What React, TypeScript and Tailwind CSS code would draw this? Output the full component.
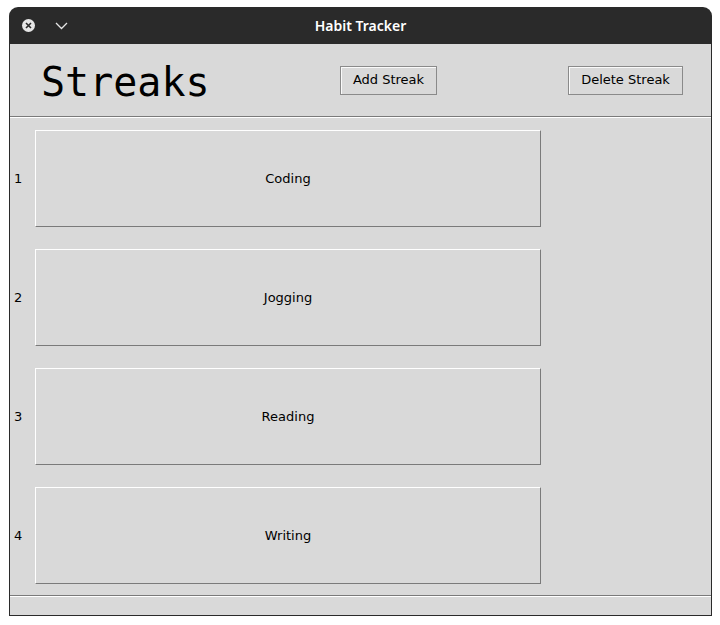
import React from 'react';

const streaks = ['Coding', 'Jogging', 'Reading', 'Writing'];

export default function App() {
  return (
    <div className="w-[720px] h-[625px] bg-white pt-[7px] pl-[9px] font-['DejaVu_Sans',sans-serif]">
      <div className="w-[703px] h-[609px] flex flex-col rounded-t-[9px] overflow-hidden bg-[#2a2a2a]">
        {/* title bar */}
        <div className="h-[37px] flex items-center relative shrink-0">
          <div className="ml-[13px] w-[13px] h-[13px] rounded-full bg-[#e6e6e6] flex items-center justify-center">
            <svg width="7" height="7" viewBox="0 0 7 7">
              <path d="M1 1 L6 6 M6 1 L1 6" stroke="#2a2a2a" strokeWidth="1.6" />
            </svg>
          </div>
          <svg className="ml-[20px]" width="13" height="8" viewBox="0 0 13 8">
            <path d="M1 1 L6.5 6.5 L12 1" stroke="#e6e6e6" strokeWidth="1.3" fill="none" />
          </svg>
          <div className="absolute inset-0 flex items-center justify-center text-white text-[14px] font-semibold font-['Noto_Sans',sans-serif]">
            Habit Tracker
          </div>
        </div>
        {/* body */}
        <div className="flex-1 flex flex-col mx-px mb-px bg-[#d9d9d9]">
          <div className="h-[72px] flex items-center shrink-0">
            <div className="ml-[31px] mt-[3px] w-[299px] text-[40px] leading-none text-black font-['DejaVu_Sans_Mono',monospace]">
              Streaks
            </div>
            <button className="w-[97px] h-[29px] text-[13px] text-black border border-[#8a8a8a] shadow-[inset_1px_1px_0_#fafafa] bg-[#d9d9d9]">
              Add Streak
            </button>
            <button className="ml-[131px] w-[115px] h-[29px] text-[13px] text-black border border-[#8a8a8a] shadow-[inset_1px_1px_0_#fafafa] bg-[#d9d9d9]">
              Delete Streak
            </button>
          </div>
          <div className="h-[480px] border-t border-[#7a7a7a] border-b">
            <div className="h-full border-t border-white pt-[12px] flex flex-col gap-[22px]">
              {streaks.map((s, i) => (
                <div key={s} className="flex items-center h-[97px]">
                  <div className="w-[25px] pl-[4px] text-[13px] text-black">{i + 1}</div>
                  <button className="w-[506px] h-[97px] text-[13px] text-black bg-[#d9d9d9] border-t border-l border-white border-b border-r border-b-[#7a7a7a] border-r-[#7a7a7a]">
                    {s}
                  </button>
                </div>
              ))}
            </div>
          </div>
          <div className="flex-1 border-t border-white" />
        </div>
      </div>
    </div>
  );
}
